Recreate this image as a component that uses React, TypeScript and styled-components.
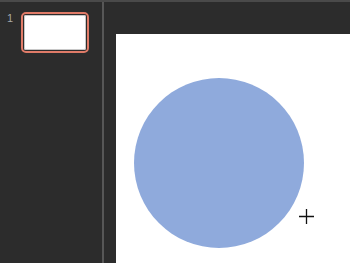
import React from "react";
import styled, { createGlobalStyle } from "styled-components";

const GlobalStyle = createGlobalStyle`
  html, body {
    margin: 0;
    padding: 0;
    background: #2c2c2c;
    overflow: hidden;
  }
`;

const Window = styled.div`
  display: flex;
  flex-direction: column;
  width: 350px;
  height: 263px;
  background: #2c2c2c;
  font-family: "Liberation Sans", Arial, sans-serif;
`;

const TopLine = styled.div`
  height: 2px;
  background: #4a4a4a;
  flex: none;
`;

const Body = styled.div`
  display: flex;
  flex: 1;
  min-height: 0;
`;

const ThumbPane = styled.div`
  width: 102px;
  flex: none;
  padding-top: 10px;
  box-sizing: border-box;
`;

const ThumbRow = styled.div`
  display: flex;
  align-items: flex-start;
  gap: 5px;
  padding-left: 7px;
`;

const ThumbNumber = styled.span`
  color: #a8a8a8;
  font-size: 11px;
  line-height: 11px;
  width: 9px;
  padding-top: 1px;
`;

const Thumb = styled.div<{ $selected?: boolean }>`
  width: 68px;
  height: 41px;
  box-sizing: border-box;
  border: 2px solid ${(p) => (p.$selected ? "#e07b68" : "transparent")};
  border-radius: 5px;
  padding: 1px;
  background: #2c2c2c;
`;

const ThumbInner = styled.div`
  width: 100%;
  height: 100%;
  background: #ffffff;
  border-radius: 2px;
  box-shadow: inset 0 0 0 1px #c8c8c8;
`;

const Splitter = styled.div`
  width: 2px;
  flex: none;
  background: #575757;
`;

const Stage = styled.div`
  flex: 1;
  padding: 32px 0 0 12px;
  overflow: hidden;
`;

const Slide = styled.div`
  position: relative;
  width: 100%;
  height: 100%;
  background: #ffffff;
  overflow: hidden;
`;

const Circle = styled.div<{ $x: number; $y: number; $d: number }>`
  position: absolute;
  left: ${(p) => p.$x}px;
  top: ${(p) => p.$y}px;
  width: ${(p) => p.$d}px;
  height: ${(p) => p.$d}px;
  border-radius: 50%;
  background: #8faadc;
`;

const Cursor = styled.svg`
  position: absolute;
  left: 183px;
  top: 175px;
`;

export default function App() {
  return (
    <>
      <GlobalStyle />
      <Window>
        <TopLine />
        <Body>
          <ThumbPane>
            <ThumbRow>
              <ThumbNumber>1</ThumbNumber>
              <Thumb $selected>
                <ThumbInner />
              </Thumb>
            </ThumbRow>
          </ThumbPane>
          <Splitter />
          <Stage>
            <Slide>
              <Circle $x={18} $y={44} $d={170} />
              <Cursor width="15" height="15" viewBox="0 0 15 15">
                <path d="M7.5 0 V15 M0 7.5 H15" stroke="#111" strokeWidth="1.3" />
              </Cursor>
            </Slide>
          </Stage>
        </Body>
      </Window>
    </>
  );
}
